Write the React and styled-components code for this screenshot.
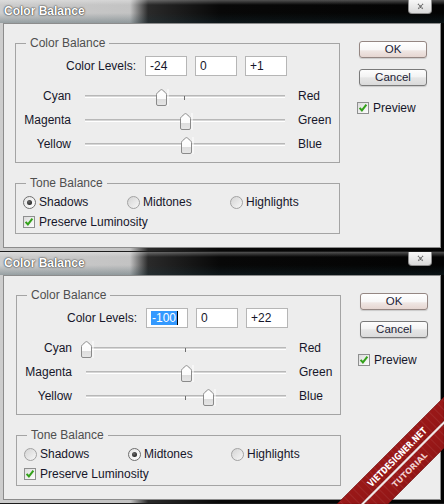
import React, { useId } from 'react'
import styled, { createGlobalStyle, css } from 'styled-components'

const GlobalStyle = createGlobalStyle`
  body {
    margin: 0;
    background: #050505;
    font-family: "Liberation Sans", Arial, sans-serif;
  }
`

const Page = styled.div`
  position: relative;
  width: 444px;
  height: 504px;
  overflow: hidden;
  display: flex;
  flex-direction: column;
`

const Window = styled.div`
  flex: none;
  height: ${p => p.$height}px;
  box-sizing: border-box;
  display: flex;
  flex-direction: column;
  border-bottom: 1px solid #1c1c1c;
  background: linear-gradient(90deg, #cdcdcd 0, #c3c3c3 130px, #2a2a2a 148px, #080808 220px, #030303 100%);
`

const TitleBar = styled.div`
  flex: none;
  height: 23px;
  display: flex;
  align-items: center;
  padding: 0 12px 0 2px;
  background: linear-gradient(180deg, rgba(255,255,255,.3) 0, rgba(255,255,255,0) 5px, rgba(0,0,0,0) 13px, rgba(25,55,65,.3) 100%);
`

const Caption = styled.span`
  font: bold 12px/23px "Liberation Sans", Arial, sans-serif;
  color: #fff;
  padding: 0 2px;
  text-shadow: 0 0 2px #2e2e2e, 0 0 1px #2e2e2e;
`

const CloseButton = styled.div`
  margin-left: auto;
  align-self: flex-start;
  width: 24px;
  height: 14px;
  box-sizing: border-box;
  border: 1px solid #8d8d8d;
  border-top: none;
  border-radius: 0 0 4px 4px;
  background: linear-gradient(#f7f7f7, #d9d9d9);
  display: flex;
  align-items: center;
  justify-content: center;
`

const Body = styled.div`
  flex: 1;
  margin: 0 3px 3px 3px;
  border: 1px solid #8c8c8c;
  background: #ededed;
  display: flex;
  align-items: flex-start;
  padding: 12px 0 0 ${p => 11 + p.$shift}px;
  color: #16162a;
  font-size: 12px;
`

const Main = styled.div`
  flex: none;
  width: 325px;
`

const Group = styled.fieldset`
  margin: 0;
  padding: 0 0 ${p => p.$bottom}px;
  border: 1px solid #a4a4a4;
  min-width: 0;
  & + & {
    margin-top: 13px;
  }
`

const Legend = styled.legend`
  margin-left: 10px;
  padding: 0 4px;
  font-size: 12px;
  line-height: 14px;
  color: #4f4f4f;
`

const LevelsRow = styled.div`
  display: flex;
  align-items: center;
  height: 20px;
  margin-top: 6px;
`

const LevelsLabel = styled.span`
  width: 120px;
  margin-right: 9px;
  text-align: right;
`

const Field = styled.div`
  width: 42px;
  height: 20px;
  box-sizing: border-box;
  border: 1px solid #b6b6b6;
  background: #fff;
  padding-left: 4px;
  line-height: 18px;
  display: flex;
  align-items: center;
  & + & {
    margin-left: 8px;
  }
`

const Selected = styled.span`
  background: #3399ff;
  color: #fff;
  line-height: 14px;
  padding: 0 1px;
`

const Caret = styled.span`
  width: 1px;
  height: 14px;
  background: #000;
`

const Sliders = styled.div`
  margin-top: 8px;
  display: flex;
  flex-direction: column;
`

const SliderRow = styled.div`
  display: flex;
  align-items: center;
  height: 24px;
`

const SideLabel = styled.span`
  width: 55px;
  text-align: right;
  ${p => p.$end && css`
    width: auto;
    text-align: left;
  `}
`

const Track = styled.div`
  position: relative;
  width: 200px;
  height: 24px;
  margin: 0 13px 0 14px;
  &::before {
    content: '';
    position: absolute;
    left: 0;
    right: 0;
    top: 11px;
    height: 1px;
    background: #b8b8b8;
    box-shadow: 0 1px 0 #d6d6d6, 0 2px 0 #fff;
  }
  &::after {
    content: '';
    position: absolute;
    left: 99px;
    top: 12px;
    width: 1px;
    height: 4px;
    background: #6e6e6e;
  }
`

const ThumbSvg = styled.svg`
  position: absolute;
  top: 5px;
  left: ${p => 94.5 + p.$value}px;
  z-index: 1;
`

const ToneRows = styled.div`
  padding: 2px 0 0 7px;
`

const RadioRow = styled.div`
  display: grid;
  grid-template-columns: 104px 103px auto;
  align-items: center;
  height: 20px;
`

const Option = styled.div`
  display: flex;
  align-items: center;
  gap: ${p => (p.$check ? 4 : 3)}px;
  height: 20px;
`

const Radio = styled.span`
  width: 13px;
  height: 13px;
  box-sizing: border-box;
  border-radius: 50%;
  border: 1px solid ${p => (p.$on ? '#6f6f6f' : '#a2a2a2')};
  background: ${p => (p.$on
    ? 'linear-gradient(135deg, #e4e4e4, #ffffff)'
    : 'linear-gradient(135deg, #d4d4d4, #f7f7f7)')};
  display: flex;
  align-items: center;
  justify-content: center;
  &::after {
    content: '';
    display: ${p => (p.$on ? 'block' : 'none')};
    width: 5px;
    height: 5px;
    border-radius: 50%;
    background: radial-gradient(circle at 40% 35%, #6a6a6a, #0d0d0d);
  }
`

const Box = styled.span`
  width: 12px;
  height: 12px;
  box-sizing: border-box;
  border: 1px solid #8e8f8f;
  background: linear-gradient(135deg, #dcdcdc, #fdfdfd);
  display: flex;
  align-items: center;
  justify-content: center;
`

const Side = styled.div`
  margin-left: 17px;
  padding-top: 5px;
  display: flex;
  flex-direction: column;
  align-items: flex-start;
`

const Button = styled.div`
  width: 68px;
  height: 17px;
  margin-left: 2px;
  box-sizing: border-box;
  border: 1px solid #7a7a7a;
  border-radius: 3px;
  background: linear-gradient(#fdfdfd 0, #f3f3f3 45%, #e6e6e6 52%, #dadada 100%);
  box-shadow: 0 1px 1px rgba(0,0,0,.15);
  text-align: center;
  font-size: 11.5px;
  line-height: 15px;
  color: #1c2236;
  & + & {
    margin-top: 11px;
  }
  ${p => p.$primary && css`
    border-color: #958783;
    background: linear-gradient(#ffffff 0, #f8f7f7 50%, #efe6e3 60%, #e6d6d1 100%);
  `}
`

const PreviewOption = styled(Option)`
  margin-top: 13px;
  height: 18px;
`

const Ribbon = styled.svg`
  position: absolute;
  right: 0;
  bottom: 0;
  pointer-events: none;
`

const Check = () =>
  <Box>
    <svg width='10' height='10' viewBox='0 0 10 10'>
      <path d='M1.6 4.8 L3.9 7.4 L8.4 1.6' fill='none' stroke='#33a11a' strokeWidth='2' />
    </svg>
  </Box>

const Thumb = ({ value }) => {
  const id = useId()
  return (
    <ThumbSvg $value={value} width='13' height='17' viewBox='0 0 13 17'>
      <defs>
        <linearGradient id={id} x1='0' y1='0' x2='0' y2='1'>
          <stop offset='0' stopColor='#ffffff' />
          <stop offset='0.56' stopColor='#fbfbfb' />
          <stop offset='0.6' stopColor='#dddddd' />
          <stop offset='1' stopColor='#e6e6e6' />
        </linearGradient>
      </defs>
      <path
        d='M0.5 5.5 Q0.5 4.6 1.4 3.8 L4.6 1 Q5.5 0.3 6.4 1 L9.6 3.8 Q10.5 4.6 10.5 5.5 V15 Q10.5 16.5 9 16.5 H2 Q0.5 16.5 0.5 15 Z'
        fill={`url(#${id})`}
        stroke='#8a8a8a'
      />
      <line x1='12' y1='0' x2='12' y2='17' stroke='#ffffff' />
    </ThumbSvg>
  )
}

const sliders = [
  ['Cyan', 'Red'],
  ['Magenta', 'Green'],
  ['Yellow', 'Blue'],
]

const tones = ['Shadows', 'Midtones', 'Highlights']

const Dialog = ({ height, levels, selected, tone, shift = 0 }) =>
  <Window $height={height}>
    <TitleBar>
      <Caption>Color Balance</Caption>
      <CloseButton>
        <svg width='7' height='7' viewBox='0 0 7 7'>
          <path d='M1 1 L6 6 M6 1 L1 6' stroke='#6a6a6a' strokeWidth='1.4' strokeDasharray='1.2 0.6' />
        </svg>
      </CloseButton>
    </TitleBar>
    <Body $shift={shift}>
      <Main>
        <Group $bottom={6}>
          <Legend>Color Balance</Legend>
          <LevelsRow>
            <LevelsLabel>Color Levels:</LevelsLabel>
            {levels.map((v, i) =>
              <Field key={i}>
                {selected && i === 0 ? <><Selected>{v}</Selected><Caret /></> : v}
              </Field>
            )}
          </LevelsRow>
          <Sliders>
            {sliders.map(([from, to], i) =>
              <SliderRow key={from}>
                <SideLabel>{from}</SideLabel>
                <Track><Thumb value={parseInt(levels[i], 10)} /></Track>
                <SideLabel $end>{to}</SideLabel>
              </SliderRow>
            )}
          </Sliders>
        </Group>
        <Group $bottom={1}>
          <Legend>Tone Balance</Legend>
          <ToneRows>
            <RadioRow>
              {tones.map(t =>
                <Option key={t}>
                  <Radio $on={t === tone} />
                  {t}
                </Option>
              )}
            </RadioRow>
            <Option $check>
              <Check />
              Preserve Luminosity
            </Option>
          </ToneRows>
        </Group>
      </Main>
      <Side>
        <Button $primary>OK</Button>
        <Button>Cancel</Button>
        <PreviewOption $check>
          <Check />
          Preview
        </PreviewOption>
      </Side>
    </Body>
  </Window>

const Watermark = () =>
  <Ribbon width='110' height='110' viewBox='0 0 110 110'>
    <defs>
      <linearGradient id='ribbon' x1='0' y1='0' x2='1' y2='1'>
        <stop offset='0' stopColor='#b32222' />
        <stop offset='0.5' stopColor='#9a1818' />
        <stop offset='1' stopColor='#7e1010' />
      </linearGradient>
      <pattern id='streak' width='6' height='6' patternUnits='userSpaceOnUse' patternTransform='rotate(-45)'>
        <rect width='6' height='6' fill='none' />
        <rect width='1' height='6' fill='rgba(255,255,255,0.07)' />
      </pattern>
    </defs>
    <polygon points='110,3 110,27 27,110 3,110' fill='url(#ribbon)' stroke='#6a0c0c' strokeWidth='0.6' />
    <polygon points='110,30 110,54 54,110 30,110' fill='url(#ribbon)' stroke='#6a0c0c' strokeWidth='0.6' />
    <polygon points='110,3 110,54 54,110 3,110' fill='url(#streak)' />
    <polygon points='110,27 110,30 30,110 27,110' fill='#f2e6e6' />
    <text
      x='63' y='63' transform='rotate(-45 63 63)'
      textAnchor='middle' dominantBaseline='central'
      textLength='79' lengthAdjust='spacingAndGlyphs'
      fill='#fff' fontSize='9.5' fontWeight='bold'
      fontFamily='"DejaVu Sans Condensed", "DejaVu Sans", sans-serif'
    >VIETDESIGNER.NET</text>
    <text
      x='76' y='76' transform='rotate(-45 76 76)'
      textAnchor='middle' dominantBaseline='central'
      textLength='46' lengthAdjust='spacingAndGlyphs'
      fill='#f0cfcf' fontSize='8' fontWeight='bold'
      fontFamily='"DejaVu Sans Condensed", "DejaVu Sans", sans-serif'
    >TUTORIAL</text>
  </Ribbon>

export default function App() {
  return (
    <Page>
      <GlobalStyle />
      <Dialog height={252} levels={['-24', '0', '+1']} tone='Shadows' />
      <Dialog height={252} levels={['-100', '0', '+22']} selected tone='Midtones' shift={1} />
      <Watermark />
    </Page>
  )
}
